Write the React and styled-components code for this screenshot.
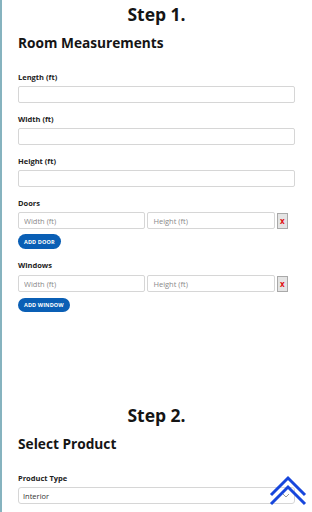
import React from "react";
import styled, { createGlobalStyle } from "styled-components";

const Global = createGlobalStyle`
  html, body { margin: 0; padding: 0; background: #fff; }
  body {
    font-family: "Open Sans", "Noto Sans", sans-serif;
    color: #1a1a1a;
    border-left: 2px solid #86b3bf;
    min-height: 512px;
    box-sizing: border-box;
  }
`;

const Page = styled.div`
  padding: 2px 17px 0 16px;
`;

const Section = styled.section`
  display: flex;
  flex-direction: column;
  margin-bottom: ${(p) => p.$gap || 0}px;
`;

const StepTitle = styled.h1`
  margin: 0;
  font-size: 17.5px;
  line-height: 24px;
  font-weight: 700;
  text-align: center;
  color: #151515;
`;

const SectionTitle = styled.h2`
  margin: 7px 0 19px;
  font-size: 13.7px;
  line-height: 20px;
  font-weight: 700;
  color: #151515;
`;

const Field = styled.div`
  display: flex;
  flex-direction: column;
  margin-bottom: ${(p) => p.$mb ?? 11}px;
`;

const Label = styled.label`
  font-size: 7.5px;
  line-height: 10px;
  font-weight: 700;
  color: #222;
  margin-bottom: ${(p) => p.$mb ?? 4}px;
`;

const Input = styled.input`
  box-sizing: border-box;
  width: ${(p) => p.$w || "100%"};
  height: 17px;
  margin: 0;
  padding: 0 5px;
  border: 1px solid #d6d6d6;
  border-radius: 2px;
  background: #fff;
  font-family: "Open Sans", sans-serif;
  font-size: 7.5px;
  color: #333;
  outline: none;
  &::placeholder { color: #8a8a8a; }
`;

const Row = styled.div`
  display: flex;
  align-items: center;
  gap: 2px;
`;

const RemoveBtn = styled.button`
  box-sizing: border-box;
  width: 11px;
  height: 16px;
  margin: 0;
  padding: 0;
  border: 1px solid #a9a9a9;
  background: #e4e4e4;
  color: #e01010;
  font-family: "Open Sans", sans-serif;
  font-weight: 700;
  font-size: 8px;
  line-height: 14px;
  text-align: center;
`;

const AddBtn = styled.button`
  align-self: flex-start;
  box-sizing: border-box;
  height: ${(p) => p.$h || 15}px;
  margin-top: ${(p) => p.$mt || 5}px;
  padding: 0 6px;
  border: none;
  border-radius: 8px;
  background: #0a5fb5;
  color: #fff;
  font-family: "Open Sans", sans-serif;
  font-weight: 700;
  font-size: 5.5px;
  letter-spacing: 0.1px;
  text-transform: uppercase;
`;

const SelectWrap = styled.div`
  position: relative;
  width: 100%;
`;

const Select = styled.select`
  display: block;
  box-sizing: border-box;
  width: 100%;
  height: 17px;
  margin: 0;
  padding: 0 4px;
  border: 1px solid #d6d6d6;
  border-radius: 3px;
  background: #fff;
  font-family: "Open Sans", sans-serif;
  font-size: 7.5px;
  color: #333;
  appearance: none;
  outline: none;
`;

const Caret = styled.svg`
  position: absolute;
  right: 5px;
  top: 6px;
`;

const TopButton = styled.a`
  position: fixed;
  right: 5px;
  bottom: 5px;
  width: 38px;
  height: 32px;
  display: block;
`;

function DimRow() {
  return (
    <Row>
      <Input $w="46%" placeholder="Width (ft)" />
      <Input $w="46%" placeholder="Height (ft)" />
      <RemoveBtn>x</RemoveBtn>
    </Row>
  );
}

export default function App() {
  return (
    <>
      <Global />
      <Page>
        <Section $gap={91}>
          <StepTitle>Step 1.</StepTitle>
          <SectionTitle>Room Measurements</SectionTitle>
          <Field>
            <Label>Length (ft)</Label>
            <Input />
          </Field>
          <Field>
            <Label>Width (ft)</Label>
            <Input />
          </Field>
          <Field>
            <Label>Height (ft)</Label>
            <Input />
          </Field>
          <Field>
            <Label>Doors</Label>
            <DimRow />
            <AddBtn>Add Door</AddBtn>
          </Field>
          <Field $mb={0}>
            <Label $mb={5}>Windows</Label>
            <DimRow />
            <AddBtn $mt={6} $h={14}>Add Window</AddBtn>
          </Field>
        </Section>
        <Section>
          <StepTitle>Step 2.</StepTitle>
          <SectionTitle>Select Product</SectionTitle>
          <Field>
            <Label>Product Type</Label>
            <SelectWrap>
              <Select defaultValue="Interior">
                <option>Interior</option>
                <option>Exterior</option>
              </Select>
              <Caret width="8" height="5" viewBox="0 0 8 5">
                <path d="M1 1l3 3 3-3" fill="none" stroke="#999" strokeWidth="1" />
              </Caret>
            </SelectWrap>
          </Field>
        </Section>
      </Page>
      <TopButton href="#top" aria-label="Back to top">
        <svg width="38" height="32" viewBox="0 0 38 32">
          <path d="M2 20L19 3l17 17" fill="none" stroke="#1746dc" strokeWidth="3" />
          <path d="M2 29L19 12l17 17" fill="none" stroke="#1746dc" strokeWidth="3" />
        </svg>
      </TopButton>
    </>
  );
}
